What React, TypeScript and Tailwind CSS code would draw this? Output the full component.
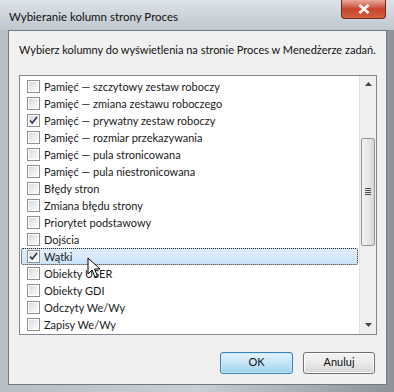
import * as React from "react"

const rows: { label: string; checked?: boolean; selected?: boolean }[] = [
  { label: "Pamięć — szczytowy zestaw roboczy" },
  { label: "Pamięć — zmiana zestawu roboczego" },
  { label: "Pamięć — prywatny zestaw roboczy", checked: true },
  { label: "Pamięć — rozmiar przekazywania" },
  { label: "Pamięć — pula stronicowana" },
  { label: "Pamięć — pula niestronicowana" },
  { label: "Błędy stron" },
  { label: "Zmiana błędu strony" },
  { label: "Priorytet podstawowy" },
  { label: "Dojścia" },
  { label: "Wątki", checked: true, selected: true },
  { label: "Obiekty USER" },
  { label: "Obiekty GDI" },
  { label: "Odczyty We/Wy" },
  { label: "Zapisy We/Wy" },
]

function Checkbox({ checked }: { checked?: boolean }) {
  return (
    <div className="relative w-[13px] h-[13px] border border-[#8f8f8f] bg-white shrink-0">
      <div className="absolute inset-[1px] bg-gradient-to-br from-[#d9d9d9] via-[#ececec] to-[#fbfbfb]" />
      {checked && (
        <svg className="absolute inset-0" width="11" height="11" viewBox="0 0 11 11">
          <path d="M2 5.5 L4.2 8 L9 2" fill="none" stroke="#28385c" strokeWidth="1.6" />
        </svg>
      )}
    </div>
  )
}

function Row({ label, checked, selected }: { label: string; checked?: boolean; selected?: boolean }) {
  return (
    <div
      className={
        selected
          ? "relative z-10 h-[17px] flex items-center gap-[4px] pl-[5px] border border-dotted border-[#222] rounded-[2px] bg-gradient-to-b from-[#e4f0fc] to-[#cbe2fa]"
          : "h-[17px] flex items-center gap-[4px] pl-[5px] border border-transparent"
      }
    >
      <Checkbox checked={checked} />
      <span className="text-[#1a1a1a] leading-none">{label}</span>
      {selected && (
        <svg className="absolute left-[65px] top-[8px]" width="14" height="22" viewBox="0 0 14 22">
          <path d="M1 1 L1 17 L5 13 L8 20 L10.5 19 L7.5 12 L13 12 Z" fill="#fff" stroke="#000" strokeWidth="1" />
        </svg>
      )}
    </div>
  )
}

function Scrollbar() {
  return (
    <div className="w-[17px] flex flex-col bg-[#efefef] border-l border-[#e3e3e3]">
      <div className="h-[17px] flex items-center justify-center">
        <svg width="7" height="4" viewBox="0 0 7 4">
          <path d="M0 4 L3.5 0 L7 4 Z" fill="#444" />
        </svg>
      </div>
      <div className="h-[45px]" />
      <div className="h-[108px] mx-[1px] rounded-[2px] border border-[#979797] bg-gradient-to-r from-[#f3f3f3] via-[#e8e8e8] to-[#d6d6d6] flex items-center justify-center">
        <div className="flex flex-col gap-[1px]">
          <div className="w-[6px] h-[1px] bg-[#4a4a4a]" />
          <div className="w-[6px] h-[1px] bg-[#4a4a4a]" />
          <div className="w-[6px] h-[1px] bg-[#4a4a4a]" />
          <div className="w-[6px] h-[1px] bg-[#4a4a4a]" />
        </div>
      </div>
      <div className="flex-1" />
      <div className="h-[17px] flex items-center justify-center">
        <svg width="7" height="4" viewBox="0 0 7 4">
          <path d="M0 0 L3.5 4 L7 0 Z" fill="#444" />
        </svg>
      </div>
    </div>
  )
}

export default function App() {
  return (
    <div className="relative w-[394px] h-[392px] overflow-hidden flex flex-col bg-gradient-to-r from-[#b7bec6] via-[#c9cfd4] to-[#8d9398] text-[11px] font-[Lato,'Noto_Sans',sans-serif]">
      {/* title bar */}
      <div className="h-[30px] flex items-start bg-gradient-to-b from-[#dde3e8] via-[#cdd4da] to-[#c0c8cf]">
        <div className="flex-1 pl-[9px] pt-[8px] text-[11.5px] text-[#111]">Wybieranie kolumn strony Proces</div>
        <div className="mr-[8px] w-[45px] h-[19px] rounded-b-[4px] border border-t-0 border-[#6d2a22] bg-gradient-to-b from-[#e9a99b] via-[#c8432f] to-[#d2613f] flex items-center justify-center">
          <svg width="12" height="10" viewBox="0 0 12 10">
            <path d="M1.5 1 L10.5 9 M10.5 1 L1.5 9" stroke="#fff" strokeWidth="2.6" />
            <path d="M1.5 1 L10.5 9 M10.5 1 L1.5 9" stroke="#f3f3f3" strokeWidth="1.6" />
          </svg>
        </div>
      </div>

      {/* client area */}
      <div className="ml-[8px] mr-[7px] h-[355px] border border-[#6f7a85] bg-[#f0f0f0] flex flex-col">
        <div className="pl-[10px] pt-[11px] text-[#111] whitespace-nowrap">
          Wybierz kolumny do wyświetlenia na stronie Proces w Menedżerze zadań.
        </div>
        <div className="mt-[16px] ml-[10px] mr-[9px] h-[260px] border border-[#828790] bg-white flex">
          <div className="flex-1 flex flex-col pt-[2px] pl-[1px] pr-[1px]">
            {rows.map((r) => (
              <Row key={r.label} {...r} />
            ))}
          </div>
          <Scrollbar />
        </div>
        <div className="mt-[17px] flex justify-end gap-[10px] pr-[11px]">
          <button className="w-[73px] h-[22px] rounded-[3px] border border-[#3c7fb1] bg-gradient-to-b from-[#e5f4fc] via-[#c4e5f6] to-[#98d1ef] shadow-[inset_0_0_0_1px_#c4ecff] text-[#111]">
            OK
          </button>
          <button className="w-[72px] h-[22px] rounded-[3px] border border-[#707070] bg-gradient-to-b from-[#f2f2f2] via-[#ebebeb] to-[#d5d5d5] shadow-[inset_0_0_0_1px_#fcfcfc] text-[#111]">
            Anuluj
          </button>
        </div>
      </div>
      <div className="flex-1" />
    </div>
  )
}
